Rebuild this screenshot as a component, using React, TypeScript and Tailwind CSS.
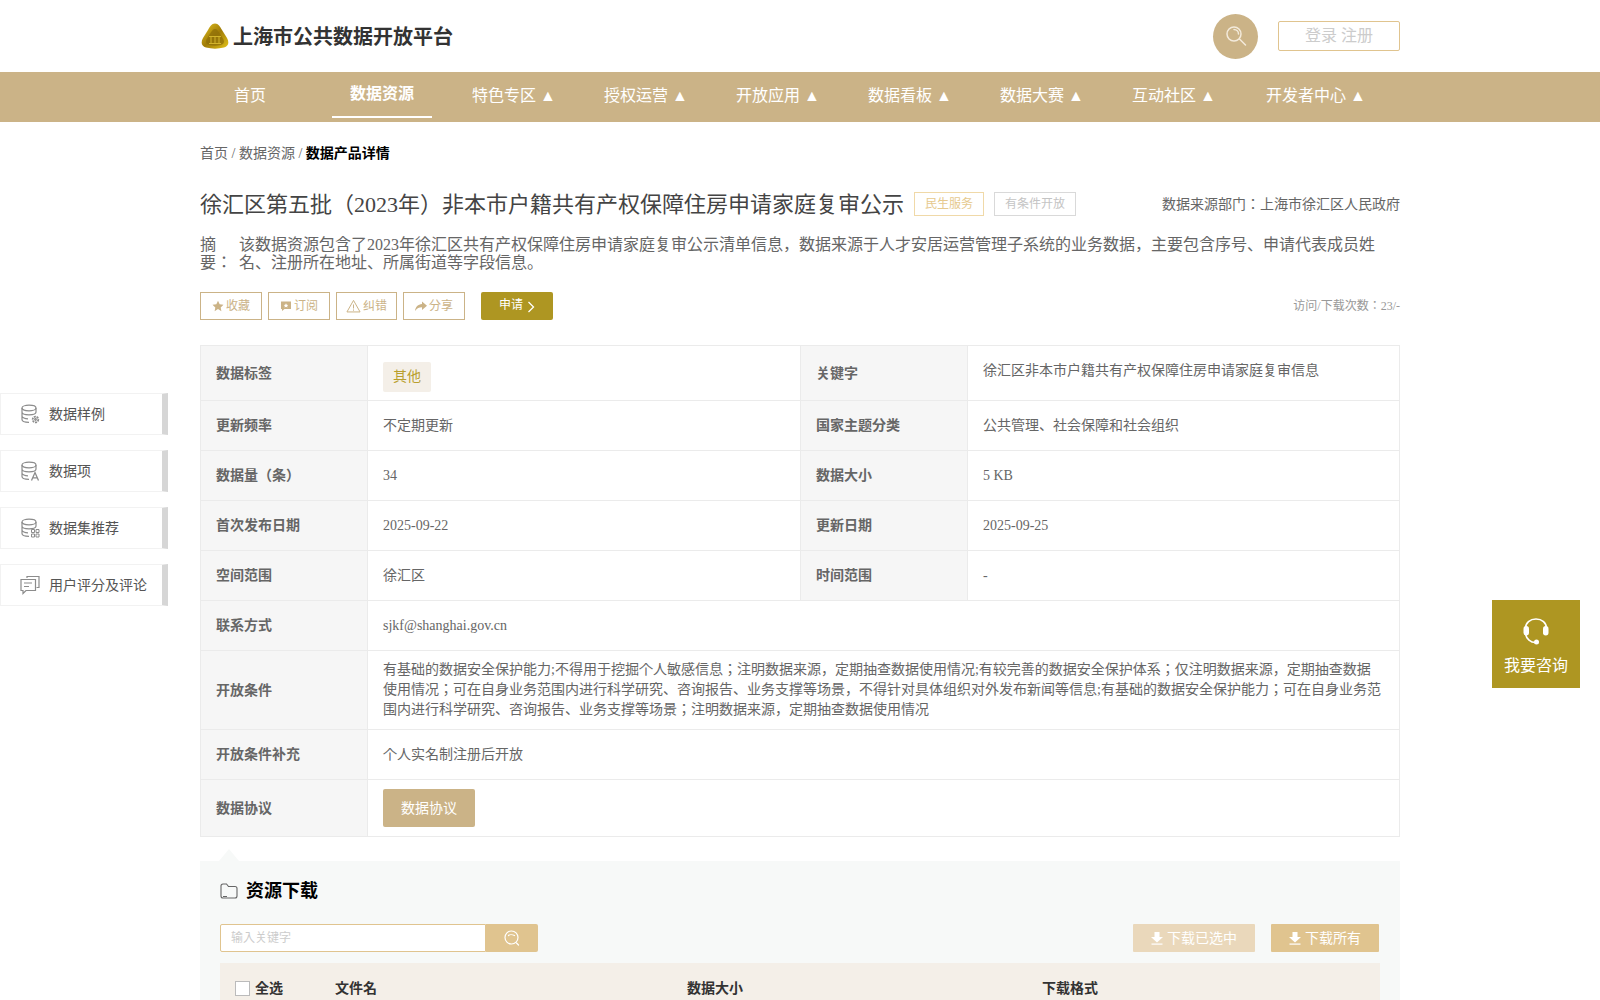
import type { ReactNode } from 'react';

const navItems = ['首页', '数据资源', '特色专区 ▲', '授权运营 ▲', '开放应用 ▲', '数据看板 ▲', '数据大赛 ▲', '互动社区 ▲', '开发者中心 ▲'];

const conditions =
  '有基础的数据安全保护能力;不得用于挖掘个人敏感信息；注明数据来源，定期抽查数据使用情况;有较完善的数据安全保护体系；仅注明数据来源，定期抽查数据使用情况；可在自身业务范围内进行科学研究、咨询报告、业务支撑等场景，不得针对具体组织对外发布新闻等信息;有基础的数据安全保护能力；可在自身业务范围内进行科学研究、咨询报告、业务支撑等场景；注明数据来源，定期抽查数据使用情况';

function Logo() {
  return (
    <svg width="28" height="26" viewBox="0 0 28 26">
      <defs>
        <linearGradient id="gold" x1="0" y1="0" x2="1" y2="1">
          <stop offset="0" stopColor="#e6c520" />
          <stop offset="0.5" stopColor="#a07c08" />
          <stop offset="1" stopColor="#e4c41a" />
        </linearGradient>
      </defs>
      <path d="M14 0.500c3.500 0 5 3 7 6.500l5 8c2.500 4.500 1.500 8-3 9.500-6 1.500-12 1.500-18 0-4.500-1.500-5.500-5-3-9.500l5-8c2-3.500 3.500-6.500 7-6.500z" fill="url(#gold)" />
      <path d="M14 6c2 0 3 2 4.500 4l4 6.500c1 2.500 0.500 4.500-2.500 5.500-4 1-8 1-12 0-3-1-3.500-3-2.500-5.500l4-6.500C11 8 12 6 14 6z" fill="#8f6f08" opacity="0.75" />
      <path d="M10 14v6M14 14v6M18 14v6M8 13.500h12M8 20.500h12" stroke="#d8ba30" strokeWidth="0.900" fill="none" />
    </svg>
  );
}

function TopSearchIcon() {
  return (
    <svg width="22" height="22" viewBox="0 0 22 22" fill="none" stroke="#f3eadb" strokeWidth="1.500" strokeLinecap="round">
      <circle cx="9" cy="9" r="7" />
      <path d="M9 4.500a4.500 4.500 0 0 1 4.500 4.500M14.500 14l6 6" />
    </svg>
  );
}

function StarIcon() {
  return (
    <svg width="12" height="12" viewBox="0 0 24 24" fill="#cbb387">
      <path d="M12 1.500l3.300 7 7.700 1-5.600 5.300 1.400 7.700L12 18l-6.800 4.500 1.400-7.700L1 9.500l7.700-1z" />
    </svg>
  );
}

function SubscribeIcon() {
  return (
    <svg width="12" height="12" viewBox="0 0 24 24">
      <path d="M2 3h20v15H9l-5 4v-4H2z" fill="#cbb387" />
      <path d="M12 6.500l1.500 3 3 .4-2.200 2.100.6 3-2.900-1.500-2.900 1.500.6-3-2.200-2.100 3-.4z" fill="#fff" />
    </svg>
  );
}

function WarnIcon() {
  return (
    <svg width="15" height="14" viewBox="0 0 24 22" fill="none" stroke="#cbb387" strokeWidth="1.600">
      <path d="M12 2L1.500 20.500h21z" />
      <path d="M12 8.500v6.500M12 16.500v2" />
    </svg>
  );
}

function ShareIcon() {
  return (
    <svg width="12" height="12" viewBox="0 0 24 24" fill="#cbb387">
      <path d="M14 3l10 8.500L14 20v-5.500C8 14.500 4 16.500 0 22c1-8 6-13.500 14-14z" />
    </svg>
  );
}

function DbBase({ children }: { children?: ReactNode }) {
  return (
    <svg width="20" height="20" viewBox="0 0 20 20" fill="none" stroke="#8c8c8c" strokeWidth="1.200">
      <ellipse cx="9" cy="4" rx="7" ry="2.800" />
      <path d="M2 4v11.500c0 1.600 3 2.800 7 2.800M16 4v4.500M2 8c0 1.600 3 2.800 7 2.800s7-1.200 7-2.800M2 12c0 1.600 3 2.800 6 2.800" />
      {children}
    </svg>
  );
}

function SampleIcon() {
  return (
    <DbBase>
      <circle cx="15.500" cy="15.500" r="2.800" strokeWidth="1.800" strokeDasharray="2 0.800" />
      <circle cx="15.500" cy="15.500" r="0.800" />
    </DbBase>
  );
}

function ItemIcon() {
  return (
    <DbBase>
      <path d="M11.500 19.500l3.500-8 3.500 8M12.800 16.800h4.400" strokeWidth="1.300" />
    </DbBase>
  );
}

function RecommendIcon() {
  return (
    <DbBase>
      <path d="M11.500 11.500h3v3h-3zM16 11.500h3v3h-3zM11.500 16h3v3h-3zM16 16h3v3h-3z" strokeWidth="1" />
    </DbBase>
  );
}

function CommentIcon() {
  return (
    <svg width="20" height="20" viewBox="0 0 20 20" fill="none" stroke="#8c8c8c" strokeWidth="1.200">
      <path d="M7 3V1.500h12v11h-2.500" />
      <path d="M1 4.500h14.500v11H6l-3 3v-3H1z" />
      <path d="M4 8h8M4 11.500h5" />
    </svg>
  );
}

function HeadsetIcon() {
  return (
    <svg width="28" height="28" viewBox="0 0 28 28" fill="none">
      <path d="M3.500 14.500v-3C3.500 6 8 2 14 2s10.500 4 10.500 9.500v1" stroke="#fff" strokeWidth="1.600" />
      <rect x="1.500" y="9" width="5.500" height="9.500" rx="2.700" fill="#fff" />
      <rect x="21" y="9" width="5.500" height="9.500" rx="2.700" fill="#fff" />
      <path d="M3.500 17c1 5 5 8.500 10 8.500" stroke="#fff" strokeWidth="1.600" />
      <circle cx="14.500" cy="25" r="2.500" fill="#fff" />
    </svg>
  );
}

function FolderIcon() {
  return (
    <svg width="18" height="16" viewBox="0 0 18 16" fill="none" stroke="#666" strokeWidth="1.100">
      <path d="M1 13V3a2 2 0 0 1 2-2h3.500l2 2.500H15a2 2 0 0 1 2 2V13a2 2 0 0 1-2 2H3a2 2 0 0 1-2-2z" />
      <path d="M8 3.500h4.500M3 13.500h4" />
    </svg>
  );
}

function DownloadIcon() {
  return (
    <svg width="12" height="13" viewBox="0 0 12 13" fill="#fff">
      <path d="M3.500 0h5v5H12L6 10.500 0 5h3.500z" />
      <rect x="0.500" y="11.500" width="11" height="1.200" />
    </svg>
  );
}

function Side({ icon, text, top }: { icon: ReactNode; text: string; top: string }) {
  return (
    <div className={`absolute left-0 ${top} flex h-[42px] w-[168px] items-center border border-[#f2f2f2] border-r-[6px] border-r-[#d6d6d6] bg-white pl-[19px] text-[14px] text-[#555]`}>
      <span className="mr-[9px] flex w-[20px]">{icon}</span>
      {text}
    </div>
  );
}

function ActionBtn({ icon, text, className }: { icon: ReactNode; text: string; className: string }) {
  return (
    <div className={`flex h-[28px] items-center justify-center gap-[2px] border border-[#cbb387] text-[12px] text-[#cbb387] ${className}`}>
      {icon}
      {text}
    </div>
  );
}

function Label({ children, className = '' }: { children: ReactNode; className?: string }) {
  return (
    <div className={`flex items-center border-b border-r border-[#ebebeb] bg-[#f6f6f6] pl-[15px] text-[14px] font-bold text-[#666] ${className}`}>
      {children}
    </div>
  );
}

function Value({ children, className = '' }: { children: ReactNode; className?: string }) {
  return (
    <div className={`flex items-center border-b border-r border-[#ebebeb] pl-[15px] pr-[16px] text-[14px] text-[#666] ${className}`}>
      {children}
    </div>
  );
}

export default function App() {
  return (
    <div className="relative h-screen overflow-hidden bg-white font-['Liberation_Serif','Noto_Sans_CJK_JP',serif]">
      <header className="mx-auto flex h-[72px] w-[1200px] items-center justify-between">
        <div className="flex items-center gap-[4px] pl-[1px]">
          <Logo />
          <span className="pt-[2px] text-[20px] font-bold text-[#333]">上海市公共数据开放平台</span>
        </div>
        <div className="flex items-center gap-[20px]">
          <div className="flex h-[45px] w-[45px] items-center justify-center rounded-full bg-[#cbb387]">
            <TopSearchIcon />
          </div>
          <div className="flex h-[30px] w-[122px] items-center justify-center rounded-[2px] border border-[#e0c48f] text-[16px] text-[#ccc]">
            登录 注册
          </div>
        </div>
      </header>

      <nav className="h-[50px] bg-[#cbb387]">
        <ul className="mx-auto flex h-full w-[1200px] gap-[32px] text-[16px] text-white">
          {navItems.map((item, i) => (
            <li
              key={item}
              className={
                i === 1
                  ? 'flex h-[46px] min-w-[100px] items-center justify-center border-b-2 border-white font-bold'
                  : i === 8
                    ? 'flex h-[46px] min-w-[120px] items-center justify-center pt-[1px] whitespace-nowrap'
                    : 'flex h-[46px] min-w-[100px] items-center justify-center pt-[1px] whitespace-nowrap'
              }
            >
              {item}
            </li>
          ))}
        </ul>
      </nav>

      <main className="mx-auto w-[1200px]">
        <div className="pt-[23px] text-[14px] leading-[18px] text-[#666]">
          首页 / 数据资源 / <span className="font-bold text-black">数据产品详情</span>
        </div>

        <div className="mt-[25px] flex h-[32px] items-center">
          <h1 className="text-[22px] font-normal text-[#444]">徐汇区第五批（2023年）非本市户籍共有产权保障住房申请家庭复审公示</h1>
          <span className="ml-[10px] flex h-[24px] w-[70px] items-center justify-center border border-[#f0d9a8] text-[12px] text-[#e6c98e]">民生服务</span>
          <span className="ml-[10px] flex h-[24px] w-[82px] items-center justify-center border border-[#d9d9d9] text-[12px] text-[#c4c4c4]">有条件开放</span>
          <span className="ml-auto text-[14px] text-[#666]">数据来源部门：上海市徐汇区人民政府</span>
        </div>

        <div className="mt-[16px] flex text-[16px] leading-[18px] text-[#666]">
          <div className="w-[39px] shrink-0">摘要：</div>
          <p className="flex-1">
            该数据资源包含了2023年徐汇区共有产权保障住房申请家庭复审公示清单信息，数据来源于人才安居运营管理子系统的业务数据，主要包含序号、申请代表成员姓名、注册所在地址、所属街道等字段信息。
          </p>
        </div>

        <div className="mt-[20px] flex items-center">
          <ActionBtn icon={<StarIcon />} text="收藏" className="w-[62px]" />
          <ActionBtn icon={<SubscribeIcon />} text="订阅" className="ml-[6px] w-[62px]" />
          <ActionBtn icon={<WarnIcon />} text="纠错" className="ml-[6px] w-[61px]" />
          <ActionBtn icon={<ShareIcon />} text="分享" className="ml-[6px] w-[62px]" />
          <div className="ml-[16px] flex h-[28px] w-[72px] items-center justify-center gap-[4px] rounded-[2px] bg-[#ae9622] pb-[2px] text-[12px] text-white">
            申请
            <svg width="8" height="12" viewBox="0 0 8 12" fill="none" stroke="#fff" strokeWidth="1.300" className="mt-[3px]">
              <path d="M1.500 1l5 5-5 5" />
            </svg>
          </div>
          <span className="ml-auto text-[12px] text-[#999]">访问/下载次数：23/-</span>
        </div>

        <div className="mt-[25px] grid grid-cols-[167px_433px_167px_432px] grid-rows-[55px_50px_50px_50px_50px_50px_79px_50px_57px] border-l border-t border-[#ebebeb]">
          <Label>数据标签</Label>
          <Value className="pt-[7px]">
            <span className="flex h-[30px] w-[48px] items-center justify-center rounded-[2px] bg-[#f4efe8] text-[#b99f2f]">其他</span>
          </Value>
          <Label>关键字</Label>
          <Value className="pb-[6px]">徐汇区非本市户籍共有产权保障住房申请家庭复审信息</Value>

          <Label>更新频率</Label>
          <Value>不定期更新</Value>
          <Label>国家主题分类</Label>
          <Value>公共管理、社会保障和社会组织</Value>

          <Label>数据量（条）</Label>
          <Value>34</Value>
          <Label>数据大小</Label>
          <Value>5 KB</Value>

          <Label>首次发布日期</Label>
          <Value>2025-09-22</Value>
          <Label>更新日期</Label>
          <Value>2025-09-25</Value>

          <Label>空间范围</Label>
          <Value>徐汇区</Value>
          <Label>时间范围</Label>
          <Value>-</Value>

          <Label>联系方式</Label>
          <Value className="col-span-3">sjkf@shanghai.gov.cn</Value>

          <Label>开放条件</Label>
          <Value className="col-span-3 leading-[20px]">{conditions}</Value>

          <Label>开放条件补充</Label>
          <Value className="col-span-3">个人实名制注册后开放</Value>

          <Label>数据协议</Label>
          <Value className="col-span-3">
            <span className="flex h-[38px] w-[92px] items-center justify-center rounded-[2px] bg-[#cbb387] text-white">数据协议</span>
          </Value>
        </div>

        <div className="mt-[12px] ml-[19px] h-0 w-0 border-x-[10px] border-b-[12px] border-x-transparent border-b-[#f7f9f8]" />
        <section className="bg-[#f7f9f8] px-[20px] pt-[20px]">
          <div className="flex h-[20px] items-center gap-[8px]">
            <FolderIcon />
            <h2 className="text-[18px] font-bold text-black">资源下载</h2>
          </div>
          <div className="mt-[23px] flex">
            <div className="flex h-[28px] w-[266px] items-center rounded-l-[2px] border border-[#e0c48f] bg-white pl-[10px] text-[12px] text-[#ccc]">输入关键字</div>
            <div className="flex h-[28px] w-[52px] items-center justify-center rounded-r-[2px] bg-[#e0c48f]">
              <svg width="16" height="16" viewBox="0 0 16 16" fill="none" stroke="#fff" strokeWidth="1.200" strokeLinecap="round">
                <circle cx="7.500" cy="7.500" r="6.500" />
                <path d="M4.500 5.500c1-1 4-1 6 0M12.500 13l2 2" />
              </svg>
            </div>
            <div className="ml-auto flex h-[28px] w-[122px] items-center justify-center gap-[4px] rounded-[1px] bg-[#ead8bb] text-[14px] text-white">
              <DownloadIcon />
              下载已选中
            </div>
            <div className="mr-[1px] ml-[16px] flex h-[28px] w-[108px] items-center justify-center gap-[4px] rounded-[1px] bg-[#e0c48f] text-[14px] text-white">
              <DownloadIcon />
              下载所有
            </div>
          </div>
          <div className="mt-[11px] flex h-[50px] items-center bg-[#f4efe8] text-[14px] font-bold text-[#333]">
            <span className="ml-[15px] h-[15px] w-[15px] border border-[#bbb] bg-white" />
            <span className="ml-[5px] w-[80px]">全选</span>
            <span className="w-[352px]">文件名</span>
            <span className="w-[355px]">数据大小</span>
            <span>下载格式</span>
          </div>
        </section>
      </main>

      <Side icon={<SampleIcon />} text="数据样例" top="top-[393px]" />
      <Side icon={<ItemIcon />} text="数据项" top="top-[450px]" />
      <Side icon={<RecommendIcon />} text="数据集推荐" top="top-[507px]" />
      <Side icon={<CommentIcon />} text="用户评分及评论" top="top-[564px]" />

      <div className="absolute left-[1492px] top-[600px] flex h-[88px] w-[88px] flex-col items-center bg-[#ae9622] pt-[17px] text-[16px] text-white">
        <HeadsetIcon />
        <span className="mt-[9px]">我要咨询</span>
      </div>
    </div>
  );
}
